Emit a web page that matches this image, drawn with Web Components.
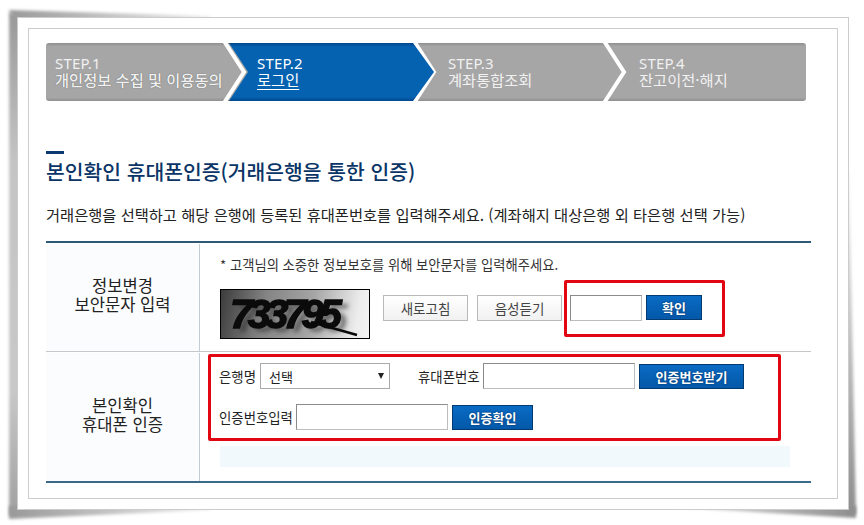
<!DOCTYPE html>
<html lang="ko">
<head>
<meta charset="utf-8">
<title>본인확인 휴대폰인증</title>
<style>
html, body { margin: 0; background: #fff; }
body {
  font-family: "Noto Sans CJK KR", "Noto Sans", sans-serif;
  color: #222;
}
</style>
</head>
<body>
<app-frame>
  <step-bar>
    <step-item num="1" label="개인정보 수집 및 이용동의" strong></step-item>
    <step-item num="2" label="로그인" current></step-item>
    <step-item num="3" label="계좌통합조회"></step-item>
    <step-item num="4" label="잔고이전·해지"></step-item>
  </step-bar>
  <page-heading text="본인확인 휴대폰인증(거래은행을 통한 인증)">거래은행을 선택하고 해당 은행에 등록된 휴대폰번호를 입력해주세요. (계좌해지 대상은행 외 타은행 선택 가능)</page-heading>
  <form-table>
    <form-row head="정보변경|보안문자 입력" kind="captcha">
      <captcha-form></captcha-form>
    </form-row>
    <form-row head="본인확인|휴대폰 인증" kind="phone">
      <phone-form></phone-form>
    </form-row>
  </form-table>
</app-frame>

<script>
const html = (strings) => {
  const t = document.createElement('template');
  t.innerHTML = strings;
  return t;
};

const frameTpl = html(`
<style>
:host { display: block; width: 864px; height: 525px; box-sizing: border-box; padding: 17px 15px 15px 17px; position: relative; overflow: hidden; }
.shadow { position: absolute; inset: 0; }
.outer { position: relative; box-sizing: border-box; height: 493px; border: 1px solid #ccc; background: #fff; padding: 10px; }
.inner { box-sizing: border-box; height: 471px; border: 1px solid #ccc; padding: 14px 0 0 17px; }
</style>
<svg class="shadow" width="864" height="525" viewBox="0 0 864 525">
  <defs>
    <filter id="b" x="-30%" y="-30%" width="160%" height="160%"><feGaussianBlur stdDeviation="1.8"/></filter>
    <linearGradient id="lv" x1="0" y1="0" x2="0" y2="1">
      <stop offset="0" stop-color="#999"/><stop offset=".3" stop-color="#c4c4c4"/><stop offset=".75" stop-color="#c8c8c8"/><stop offset="1" stop-color="#a0a0a0"/>
    </linearGradient>
    <linearGradient id="lr" x1="0" y1="0" x2="1" y2="0">
      <stop offset="0" stop-color="#999"/><stop offset="1" stop-color="#eee"/>
    </linearGradient>
    <linearGradient id="rl" x1="0" y1="0" x2="1" y2="0">
      <stop offset="0" stop-color="#f2f2f2"/><stop offset="1" stop-color="#8e8e8e"/>
    </linearGradient>
    <linearGradient id="rv" x1="0" y1="0" x2="0" y2="1">
      <stop offset="0" stop-color="#f4f4f4"/><stop offset="1" stop-color="#8e8e8e"/>
    </linearGradient>
  </defs>
  <path d="M9 12 L20 18 L20 510 L9 516 Z" fill="url(#lv)" filter="url(#b)"/>
  <path d="M9 10 L210 16 L210 20 L14 20 Z" fill="url(#lr)" filter="url(#b)"/>
  <path d="M9 506 L210 506 L210 510 L9 519 Z" fill="url(#lr)" filter="url(#b)"/>
  <path d="M650 506 L856 506 L856 518 Z" fill="url(#rl)" filter="url(#b)"/>
  <path d="M846 170 L849 170 L856 514 L846 514 Z" fill="url(#rv)" filter="url(#b)"/>
</svg>
<div class="outer"><div class="inner"><slot></slot></div></div>
`);
class AppFrame extends HTMLElement {
  constructor() {
    super();
    this.attachShadow({ mode: 'open' }).appendChild(frameTpl.content.cloneNode(true));
  }
}

const barTpl = html(`
<style>
:host { display: grid; grid-template-columns: 191px 191px 191px 187px; width: 760px; height: 58px; position: relative; }
svg { position: absolute; left: 0; top: 0; }
::slotted(step-item) { position: relative; }
</style>
<svg width="760" height="58" viewBox="0 0 760 58">
  <defs>
    <linearGradient id="blue" x1="0" y1="0" x2="0" y2="1">
      <stop offset="0" stop-color="#00488f"/><stop offset=".07" stop-color="#0562b0"/>
      <stop offset=".93" stop-color="#0562b0"/><stop offset="1" stop-color="#00488f"/>
    </linearGradient>
    <linearGradient id="grey" x1="0" y1="0" x2="0" y2="1">
      <stop offset="0" stop-color="#8f8f8f"/><stop offset=".06" stop-color="#a6a6a6"/>
      <stop offset=".94" stop-color="#a6a6a6"/><stop offset="1" stop-color="#8f8f8f"/>
    </linearGradient>
  </defs>
  <rect width="760" height="58" rx="3" fill="url(#grey)"/>
  <path d="M178 -2 L198 29 L178 60" fill="none" stroke="#fff" stroke-width="4"/>
  <path d="M558 -2 L578 29 L558 60" fill="none" stroke="#fff" stroke-width="4"/>
  <path d="M368 -2 L388 29 L368 60" fill="none" stroke="#fff" stroke-width="4"/>
  <path d="M183 0 H367 L388 29 L367 58 H183 L202 29 Z" fill="url(#blue)"/>
</svg>
<slot></slot>
`);
class StepBar extends HTMLElement {
  constructor() {
    super();
    this.attachShadow({ mode: 'open' }).appendChild(barTpl.content.cloneNode(true));
  }
}

const stepTpl = html(`
<style>
:host { display: block; padding: 12px 0 0 9px; color: #f1f1f1; font-size: 15.3px; line-height: 17px; white-space: nowrap; }
:host([current]) { color: #fff; }
:host([num="2"]) { padding-left: 20px; }
:host([num="3"]) { padding-left: 20px; }
:host([num="4"]) { padding-left: 20px; }
.n { display: block; font-size: 15px; letter-spacing: .2px; font-family: "Noto Sans", sans-serif; }
.l { display: block; margin-top: -1px; }
:host([current]) .l { text-decoration: underline; text-underline-offset: 3px; }
:host([strong]) .l { font-weight: 500; text-shadow: 0 0 1px #555; }
</style>
<span class="n"></span><span class="l"></span>
`);
class StepItem extends HTMLElement {
  constructor() {
    super();
    this.attachShadow({ mode: 'open' }).appendChild(stepTpl.content.cloneNode(true));
  }
  connectedCallback() {
    this.shadowRoot.querySelector('.n').textContent = 'STEP.' + this.getAttribute('num');
    this.shadowRoot.querySelector('.l').textContent = this.getAttribute('label');
  }
}

const headingTpl = html(`
<style>
:host { display: block; padding-top: 50px; }
i { display: block; width: 18px; height: 3px; background: #0b3a6e; }
h2 { margin: 4px 0 0; font-size: 20.4px; line-height: 26px; font-weight: 500; color: #0a3566; white-space: nowrap; }
p { margin: 19px 0 0; font-size: 15.3px; line-height: 22px; color: #222; white-space: nowrap; }
</style>
<i></i><h2></h2><p><slot></slot></p>
`);
class PageHeading extends HTMLElement {
  constructor() {
    super();
    this.attachShadow({ mode: 'open' }).appendChild(headingTpl.content.cloneNode(true));
  }
  connectedCallback() {
    this.shadowRoot.querySelector('h2').textContent = this.getAttribute('text');
  }
}

const tableTpl = html(`
<style>
:host { display: block; width: 765px; margin-top: 16px; border-top: 2px solid #2c5a76; border-bottom: 2px solid #3b6a88; }
</style>
<slot></slot>
`);
class FormTable extends HTMLElement {
  constructor() {
    super();
    this.attachShadow({ mode: 'open' }).appendChild(tableTpl.content.cloneNode(true));
  }
}

const rowTpl = html(`
<style>
:host { display: grid; grid-template-columns: 154px 1fr; }
:host([kind="captcha"]) { height: 108px; border-bottom: 1px solid #c4c8ca; }
:host([kind="phone"]) { height: 129px; }
.h { display: flex; align-items: center; justify-content: center; text-align: center; background: #fafcfd; border-right: 1px solid #c2cdd3; font-size: 16.6px; line-height: 19px; color: #222; margin-top: 1px; }
:host([kind="captcha"]) .h { padding-bottom: 6px; }
:host([kind="phone"]) .h { padding-bottom: 4px; }
.b { min-width: 0; }
</style>
<div class="h"><span></span></div><div class="b"><slot></slot></div>
`);
class FormRow extends HTMLElement {
  constructor() {
    super();
    this.attachShadow({ mode: 'open' }).appendChild(rowTpl.content.cloneNode(true));
  }
  connectedCallback() {
    const span = this.shadowRoot.querySelector('span');
    this.getAttribute('head').split('|').forEach((line, i) => {
      if (i) span.appendChild(document.createElement('br'));
      span.appendChild(document.createTextNode(line));
    });
  }
}

const btnTpl = html(`
<style>
:host { display: inline-flex; box-sizing: border-box; align-items: center; justify-content: center; height: 25px; font-size: 13px; font-weight: 700; color: #fff; white-space: nowrap;
  background: linear-gradient(#0a6bc4, #0458a8); border: 1px solid #023a72; text-shadow: 0 0 2px #012a5a; }
:host([plain]) { height: 26px; font-weight: 400; font-size: 13.5px; color: #444; text-shadow: none; background: linear-gradient(#fff, #f1f1f1); border: 1px solid #b9b9b9; }
</style>
<slot></slot>
`);
class AppBtn extends HTMLElement {
  constructor() {
    super();
    this.attachShadow({ mode: 'open' }).appendChild(btnTpl.content.cloneNode(true));
  }
}

const fieldTpl = html(`
<style>
:host { display: inline-block; box-sizing: border-box; height: 26px; background: #fff; border: 1px solid #bdbdbd; border-top-color: #8b8b8b; border-left-color: #8b8b8b; }
</style>
`);
class TextField extends HTMLElement {
  constructor() {
    super();
    this.attachShadow({ mode: 'open' }).appendChild(fieldTpl.content.cloneNode(true));
  }
}

const selectTpl = html(`
<style>
:host { display: inline-flex; box-sizing: border-box; width: 130px; height: 26px; align-items: center; justify-content: space-between; padding: 0 5px 0 8px; background: #fff; border: 1px solid #a9a9a9; font-size: 13px; color: #222; }
i { width: 0; height: 0; border: 3.5px solid transparent; border-top: 6px solid #222; border-bottom: 0; }
</style>
<slot></slot><i></i>
`);
class SelectBox extends HTMLElement {
  constructor() {
    super();
    this.attachShadow({ mode: 'open' }).appendChild(selectTpl.content.cloneNode(true));
  }
}

const captchaTpl = html(`
<style>
:host { display: block; position: relative; box-sizing: border-box; width: 150px; height: 50px; border: 1px solid #000; overflow: hidden;
  background: linear-gradient(100deg, #3c3c3c 0%, #858585 30%, #a5a5a5 60%, #ececec 90%, #f4f4f4 100%); }
span { position: absolute; left: 9px; top: 0; font: italic 700 41px/48px "Liberation Sans", sans-serif; letter-spacing: -5px; color: #0b0b0b; -webkit-text-stroke: 1.4px #0b0b0b; text-shadow: 6px 4px 4px rgba(40,40,40,.55); white-space: nowrap; filter: blur(.5px); }
svg { position: absolute; left: 0; top: 0; }
</style>
<span>733795</span>
<svg width="148" height="48"><path d="M90 32 L136 45" stroke="#0a0a0a" stroke-width="2.5" fill="none"/></svg>
`);
class CaptchaImage extends HTMLElement {
  constructor() {
    super();
    this.attachShadow({ mode: 'open' }).appendChild(captchaTpl.content.cloneNode(true));
  }
}

const captchaFormTpl = html(`
<style>
:host { display: block; padding: 14px 0 0 20px; position: relative; }
p { margin: 0; font-size: 13.3px; line-height: 16px; color: #333; white-space: nowrap; }
.line { display: flex; align-items: flex-start; margin-top: 16px; }
captcha-image { margin-right: 13px; }
app-btn { margin-top: 6px; }
.re { width: 85px; margin-right: 9px; }
.voice { width: 85px; margin-right: 8px; }
text-field { width: 72px; margin: 6px 4px 0 0; }
.ok { width: 56px; }
red-mark { position: absolute; left: 364px; top: 37px; width: 161px; height: 57px; }
</style>
<p>* 고객님의 소중한 정보보호를 위해 보안문자를 입력해주세요.</p>
<div class="line">
  <captcha-image></captcha-image>
  <app-btn plain class="re">새로고침</app-btn>
  <app-btn plain class="voice">음성듣기</app-btn>
  <text-field></text-field>
  <app-btn class="ok">확인</app-btn>
</div>
<red-mark></red-mark>
`);
class CaptchaForm extends HTMLElement {
  constructor() {
    super();
    this.attachShadow({ mode: 'open' }).appendChild(captchaFormTpl.content.cloneNode(true));
  }
}

const phoneFormTpl = html(`
<style>
:host { display: block; padding: 11px 0 0 19px; position: relative; font-size: 13.4px; color: #222; }
.line { display: flex; align-items: center; height: 26px; white-space: nowrap; }
.line + .line { margin-top: 15px; }
label { flex: none; }
.l1 { width: 41px; }
.l2 { width: 65px; }
.l3 { width: 77px; }
.bank { margin-right: 28px; }
.w { width: 152px; margin-right: 4px; }
.get { width: 105px; }
.chk { width: 81px; }
.notice { width: 570px; height: 21px; margin: 16px 0 0 1px; background: #f2f9fc; }
red-mark { position: absolute; left: 8px; top: 2px; width: 573px; height: 87px; }
</style>
<div class="line">
  <label class="l1">은행명</label><select-box class="bank">선택</select-box>
  <label class="l2">휴대폰번호</label><text-field class="w"></text-field><app-btn class="get">인증번호받기</app-btn>
</div>
<div class="line">
  <label class="l3">인증번호입력</label><text-field class="w"></text-field><app-btn class="chk">인증확인</app-btn>
</div>
<div class="notice"></div>
<red-mark></red-mark>
`);
class PhoneForm extends HTMLElement {
  constructor() {
    super();
    this.attachShadow({ mode: 'open' }).appendChild(phoneFormTpl.content.cloneNode(true));
  }
}

const markTpl = html(`
<style>
:host { display: block; box-sizing: border-box; border: 3px solid #e20612; border-radius: 2px; pointer-events: none; }
</style>
`);
class RedMark extends HTMLElement {
  constructor() {
    super();
    this.attachShadow({ mode: 'open' }).appendChild(markTpl.content.cloneNode(true));
  }
}

customElements.define('app-frame', AppFrame);
customElements.define('step-bar', StepBar);
customElements.define('step-item', StepItem);
customElements.define('page-heading', PageHeading);
customElements.define('form-table', FormTable);
customElements.define('form-row', FormRow);
customElements.define('app-btn', AppBtn);
customElements.define('text-field', TextField);
customElements.define('select-box', SelectBox);
customElements.define('captcha-image', CaptchaImage);
customElements.define('captcha-form', CaptchaForm);
customElements.define('phone-form', PhoneForm);
customElements.define('red-mark', RedMark);
</script>
</body>
</html>
